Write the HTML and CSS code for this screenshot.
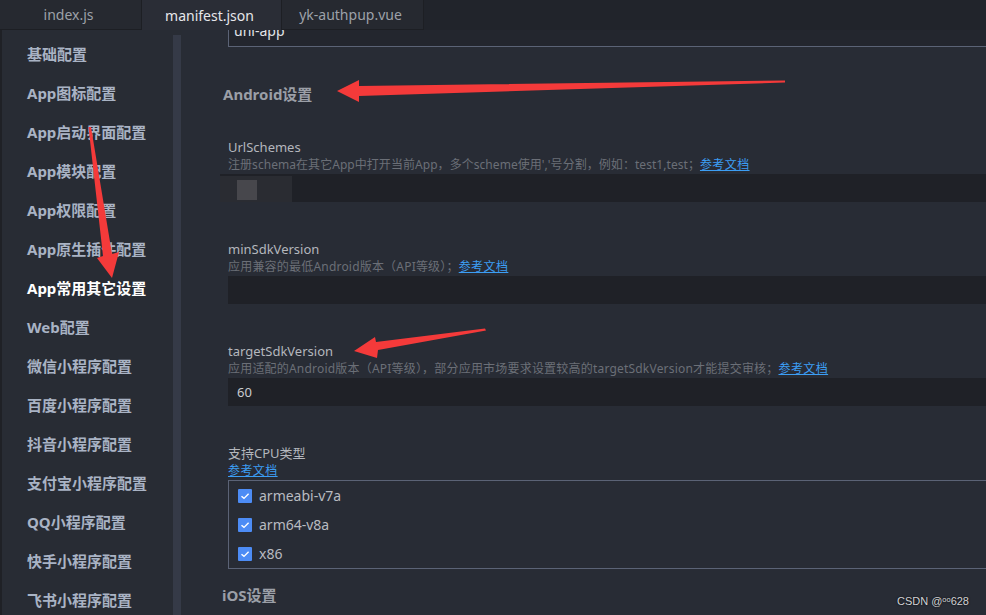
FILE: index.html
```html
<!DOCTYPE html>
<html lang="zh-CN">
<head>
<meta charset="utf-8">
<title>manifest.json</title>
<link rel="stylesheet" href="styles.css">
</head>
<body>
<div class="app">
  <div class="tabbar">
    <div class="tab">index.js</div>
    <div class="tab tab-active">manifest.json</div>
    <div class="tab">yk-authpup.vue</div>
  </div>
  <div class="body">
    <nav class="sidebar">
      <ul class="menu">
        <li class="menu-item">基础配置</li>
        <li class="menu-item">App图标配置</li>
        <li class="menu-item">App启动界面配置</li>
        <li class="menu-item">App模块配置</li>
        <li class="menu-item">App权限配置</li>
        <li class="menu-item">App原生插件配置</li>
        <li class="menu-item menu-active">App常用其它设置</li>
        <li class="menu-item">Web配置</li>
        <li class="menu-item">微信小程序配置</li>
        <li class="menu-item">百度小程序配置</li>
        <li class="menu-item">抖音小程序配置</li>
        <li class="menu-item">支付宝小程序配置</li>
        <li class="menu-item">QQ小程序配置</li>
        <li class="menu-item">快手小程序配置</li>
        <li class="menu-item">飞书小程序配置</li>
      </ul>
      <div class="scrollbar"></div>
    </nav>
    <main class="content">
      <div class="top-input"><span class="top-input-text">uni-app</span></div>

      <h2 class="section-title">Android设置</h2>

      <div class="field field-first">
        <div class="field-label">UrlSchemes</div>
        <div class="field-desc field-desc-tight">注册schema在其它App中打开当前App，多个scheme使用','号分割，例如：test1,test；<a class="doc-link">参考文档</a></div>
        <div class="input input-blur"><span class="blur-zone"><span class="blur-square"></span></span></div>
      </div>

      <div class="field">
        <div class="field-label">minSdkVersion</div>
        <div class="field-desc">应用兼容的最低Android版本（API等级）；<a class="doc-link">参考文档</a></div>
        <div class="input"></div>
      </div>

      <div class="field">
        <div class="field-label">targetSdkVersion</div>
        <div class="field-desc">应用适配的Android版本（API等级），部分应用市场要求设置较高的targetSdkVersion才能提交审核；<a class="doc-link">参考文档</a></div>
        <div class="input"><span class="input-value">60</span></div>
      </div>

      <div class="field">
        <div class="field-label">支持CPU类型</div>
        <div class="field-desc"><a class="doc-link">参考文档</a></div>
        <div class="check-box">
          <label class="check-row"><svg class="check" width="14" height="14" viewBox="0 0 14 14"><rect width="14" height="14" rx="1" fill="#4d8cf5"/><path d="M3.5 7.2 L6 9.4 L10.6 4.8" fill="none" stroke="#fff" stroke-width="1.4"/></svg><span>armeabi-v7a</span></label>
          <label class="check-row"><svg class="check" width="14" height="14" viewBox="0 0 14 14"><rect width="14" height="14" rx="1" fill="#4d8cf5"/><path d="M3.5 7.2 L6 9.4 L10.6 4.8" fill="none" stroke="#fff" stroke-width="1.4"/></svg><span>arm64-v8a</span></label>
          <label class="check-row"><svg class="check" width="14" height="14" viewBox="0 0 14 14"><rect width="14" height="14" rx="1" fill="#4d8cf5"/><path d="M3.5 7.2 L6 9.4 L10.6 4.8" fill="none" stroke="#fff" stroke-width="1.4"/></svg><span>x86</span></label>
        </div>
      </div>

      <h2 class="section-title section-ios">iOS设置</h2>
    </main>
  </div>

  <svg class="annotations" width="986" height="615" viewBox="0 0 986 615">
    <polygon fill="#f43a3a" points="785,80.5 785,82.5 359,96 359,102 337,91 359,80 359,86"/>
    <polygon fill="#f43a3a" points="88.5,127 91,127 112,254 119,252 112,278 97,258 103,256"/>
    <polygon fill="#f43a3a" points="485,328.5 486,330.5 378,350 377,358 354,351 375,337 376,342"/>
  </svg>
  <div class="watermark">CSDN @ᵒᵒ628</div>
</div>
</body>
</html>
```

FILE: styles.css
```css
* { box-sizing: border-box; }

html, body {
  margin: 0;
  padding: 0;
  width: 986px;
  height: 615px;
  overflow: hidden;
  background: #282c35;
  font-family: "Noto Sans", "Noto Sans CJK SC", sans-serif;
}

.app {
  position: relative;
  width: 986px;
  height: 615px;
  display: flex;
  flex-direction: column;
}

/* Tabs */
.tabbar {
  display: flex;
  height: 30px;
  background: #21242b;
  flex: none;
}
.tab {
  display: flex;
  align-items: center;
  justify-content: center;
  padding-right: 4px;
  width: 142px;
  height: 30px;
  background: #262930;
  color: #9da1a9;
  font-size: 14px;
  border-right: 1px solid #1d1f24;
  border-bottom: 1px solid #1d1f24;
}
.tab-active {
  width: 140px;
  background: #2a2d36;
  color: #e6e7ea;
  border-bottom: none;
}

/* Body */
.body {
  display: flex;
  flex: 1;
  min-height: 0;
}

.sidebar {
  width: 182px;
  flex: none;
  display: flex;
  background: #282c34;
  border-left: 2px solid #1f2126;
}
.menu {
  list-style: none;
  margin: 0;
  padding: 5px 0 0 25px;
  width: 171px;
  overflow: hidden;
}
.menu-item {
  height: 39px;
  line-height: 39px;
  font-size: 15px;
  font-weight: bold;
  color: #a9b3c4;
  white-space: nowrap;
}
.menu-active { color: #ffffff; }

.scrollbar {
  width: 8px;
  margin-top: 5px;
  background: #353a47;
}

/* Content */
.content {
  flex: 1;
  min-width: 0;
  overflow: hidden;
  padding-left: 41px;
}

.top-input {
  margin-left: 5px;
  height: 17px;
  background: #23262e;
  border-left: 1px solid #5b6376;
  border-bottom: 1px solid #5b6376;
  overflow: hidden;
}
.top-input-text {
  display: block;
  margin-top: -10px;
  padding-left: 5px;
  line-height: 22px;
  font-size: 14px;
  color: #e2e4e8;
}

.section-title {
  margin: 37px 0 0;
  height: 20px;
  line-height: 20px;
  font-size: 15px;
  font-weight: bold;
  color: #9b9fa7;
}
.section-ios {
  margin-top: 16px;
  margin-left: -1px;
}

.field {
  margin: 39px 0 0 5px;
}
.field-first { margin-top: 35px; }

.field-label {
  height: 17px;
  line-height: 17px;
  font-size: 13px;
  color: #b4b7bd;
  white-space: nowrap;
}
.field-desc {
  height: 18px;
  line-height: 18px;
  font-size: 12px;
  letter-spacing: 0.2px;
  color: #6b6f77;
  white-space: nowrap;
}
.field-desc-tight {
  letter-spacing: 0.05px;
}
.doc-link {
  color: #3c9ef4;
  text-decoration: underline;
  letter-spacing: 0.4px;
}

.input {
  display: flex;
  align-items: center;
  height: 28px;
  background: #1f2127;
}
.input-value {
  padding-left: 9px;
  font-size: 13px;
  color: #c9cbd0;
}
.blur-zone {
  display: flex;
  align-items: flex-start;
  width: 72px;
  height: 28px;
  margin-left: -8px;
  padding: 4px 0 0 17px;
  background: #2a2c32;
  border-top: 2px solid #1f2127;
}
.blur-square {
  width: 20px;
  height: 20px;
  background: #47474c;
}

.check-box {
  border: 1px solid #5b6376;
  border-right: none;
  padding: 0;
}
.check-row {
  display: flex;
  align-items: center;
  height: 29px;
  padding-left: 9px;
  gap: 7px;
  font-size: 14px;
  color: #b8bbc1;
}
.check { flex: none; }

/* Overlays */
.annotations {
  position: absolute;
  left: 0;
  top: 0;
  pointer-events: none;
}
.watermark {
  position: absolute;
  right: 17px;
  bottom: 8px;
  font-family: "Liberation Sans", sans-serif;
  font-size: 11px;
  color: #d2d3d6;
  text-shadow: 0 0 2px #000;
}
```
